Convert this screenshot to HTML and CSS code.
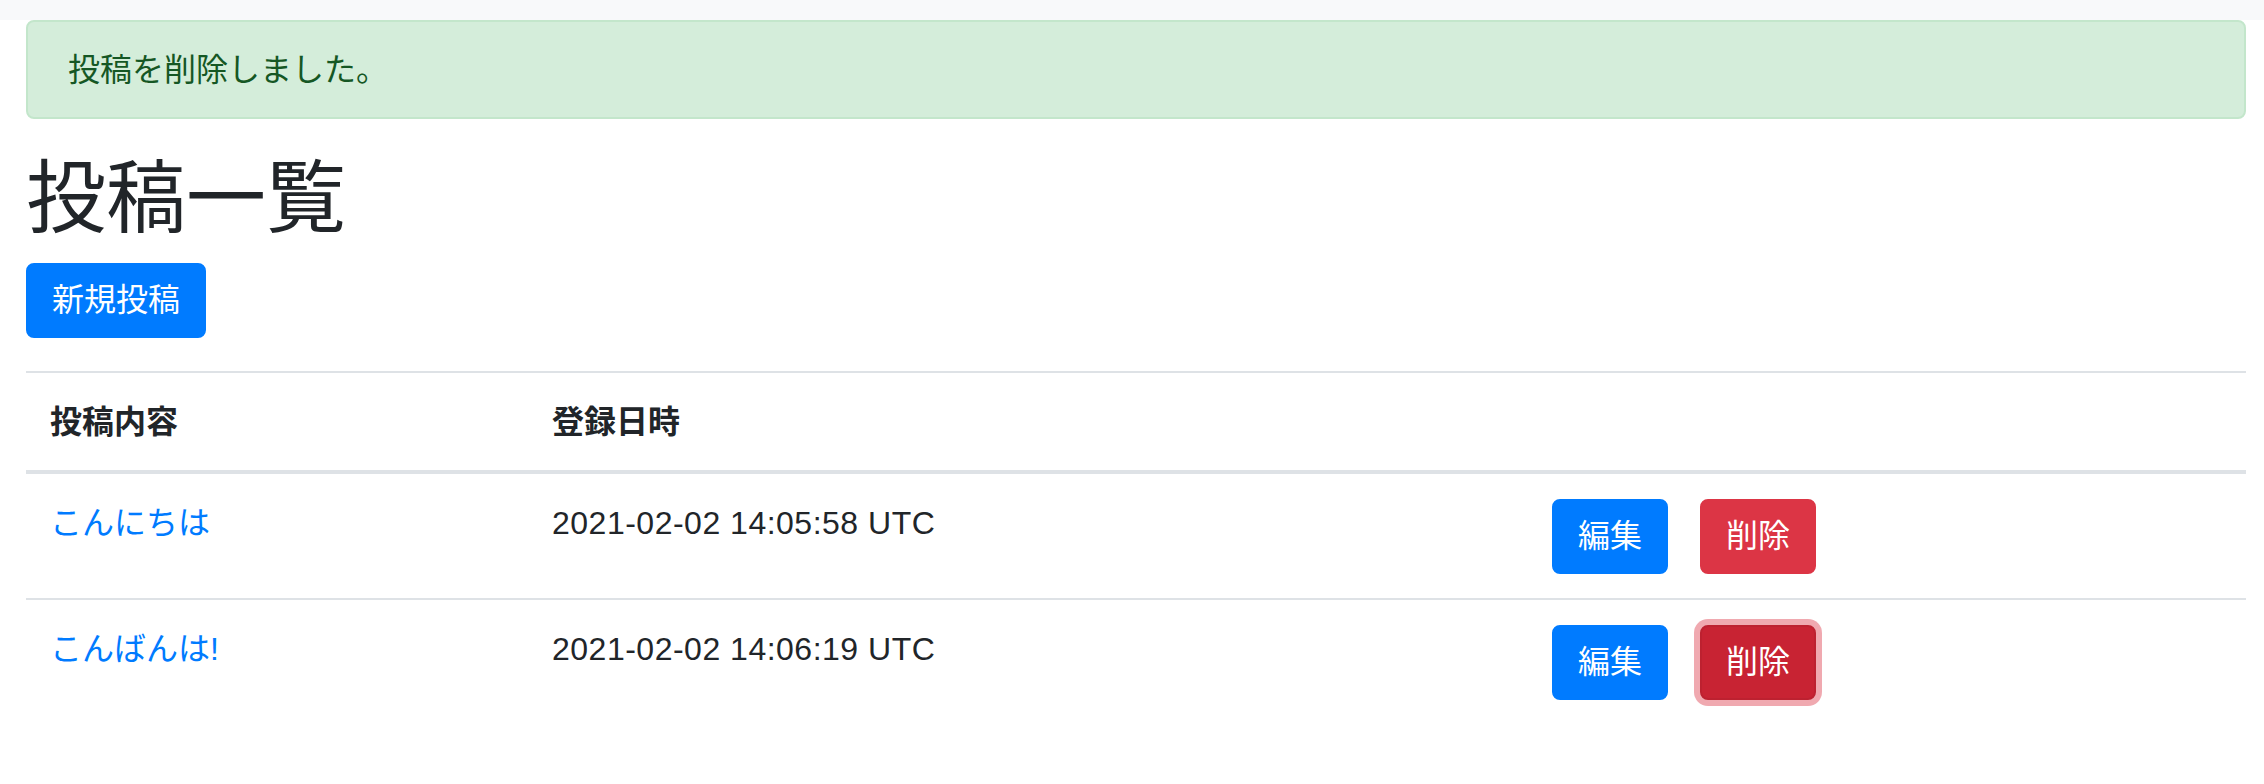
FILE: index.html
```html
<!DOCTYPE html>
<html lang="ja">
<head>
<meta charset="utf-8">
<title>投稿一覧</title>
<link rel="stylesheet" href="styles.css">
</head>
<body>
<div class="topbar"></div>
<main class="container">
  <div class="alert">投稿を削除しました。</div>
  <h1 class="title">投稿一覧</h1>
  <a class="btn btn-primary btn-new" href="#">新規投稿</a>
  <table class="table">
    <thead>
      <tr>
        <th class="col-content">投稿内容</th>
        <th class="col-date">登録日時</th>
        <th class="col-actions"></th>
      </tr>
    </thead>
    <tbody>
      <tr>
        <td><a class="link" href="#">こんにちは</a></td>
        <td class="date">2021-02-02 14:05:58 UTC</td>
        <td>
          <div class="actions">
            <a class="btn btn-primary" href="#">編集</a>
            <a class="btn btn-danger" href="#">削除</a>
          </div>
        </td>
      </tr>
      <tr>
        <td><a class="link" href="#">こんばんは!</a></td>
        <td class="date">2021-02-02 14:06:19 UTC</td>
        <td>
          <div class="actions">
            <a class="btn btn-primary" href="#">編集</a>
            <a class="btn btn-danger btn-focus" href="#">削除</a>
          </div>
        </td>
      </tr>
    </tbody>
  </table>
</main>
</body>
</html>
```

FILE: styles.css
```css
* {
  box-sizing: border-box;
}

html, body {
  margin: 0;
  padding: 0;
  background: #ffffff;
}

body {
  font-family: "Liberation Sans", "Noto Sans CJK JP", sans-serif;
  font-size: 32px;
  line-height: 48px;
  color: #212529;
}

.topbar {
  height: 20px;
  background: #f8f9fa;
}

.container {
  padding: 0 18px 0 26px;
}

.alert {
  height: 99px;
  padding: 0 40px;
  display: flex;
  align-items: center;
  background: #d4edda;
  border: 2px solid #c3e6cb;
  border-radius: 8px;
  color: #155724;
}

.title {
  margin: 32px 0 16px;
  font-size: 80px;
  line-height: 96px;
  font-weight: 400;
  color: #212529;
}

.btn {
  display: inline-block;
  height: 75px;
  padding: 0 24px;
  line-height: 71px;
  border: 2px solid transparent;
  border-radius: 8px;
  color: #ffffff;
  text-decoration: none;
  white-space: nowrap;
}

.btn-primary {
  background: #007bff;
  border-color: #007bff;
}

.btn-danger {
  background: #dc3545;
  border-color: #dc3545;
}

.btn-focus {
  background: #c82333;
  border-color: #bd2130;
  box-shadow: 0 0 0 6px rgba(225, 83, 97, 0.5);
}

.btn-new {
  margin-bottom: 33px;
}

.table {
  width: 100%;
  border-collapse: collapse;
  table-layout: fixed;
}

.table th,
.table td {
  padding: 25px 24px 24px;
  text-align: left;
  vertical-align: top;
  border-top: 2px solid #dee2e6;
}

.table th {
  font-weight: 700;
  border-bottom: 4px solid #dee2e6;
}

.col-content {
  width: 502px;
}

.col-date {
  width: 1000px;
}

.link {
  color: #007bff;
  text-decoration: none;
}

.date {
  letter-spacing: 0.5px;
}

.actions {
  display: flex;
  gap: 32px;
}
```
